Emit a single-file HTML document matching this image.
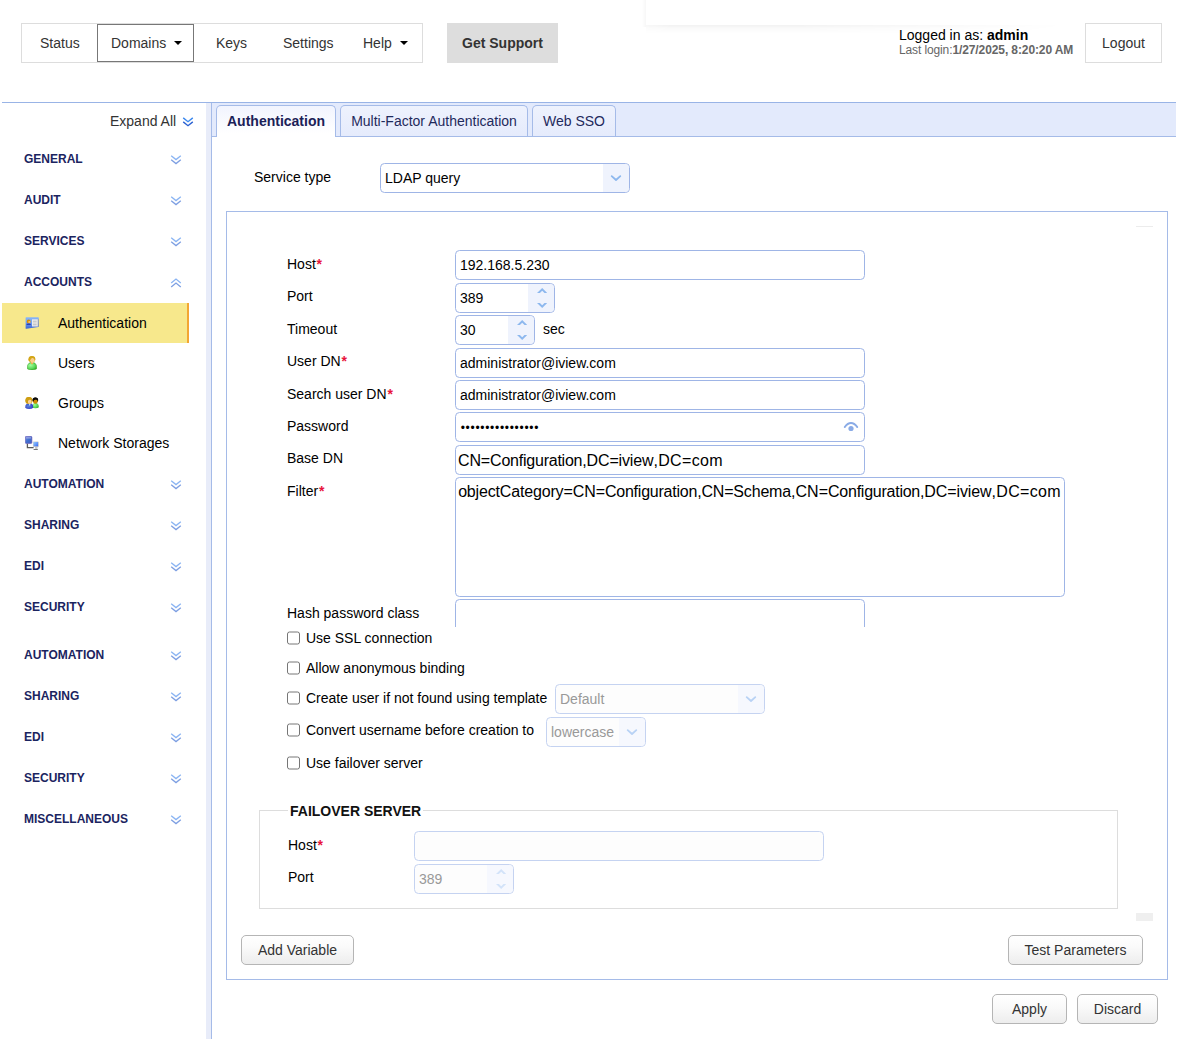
<!DOCTYPE html>
<html lang="en">
<head>
<meta charset="utf-8">
<title>Authentication</title>
<style>
*{box-sizing:border-box;margin:0;padding:0}
html,body{width:1179px;height:1039px;overflow:hidden;background:#fff}
body{font-family:"Liberation Sans",Arial,sans-serif;font-size:14px;color:#000;position:relative}
.abs{position:absolute}
.t{position:absolute;white-space:nowrap;line-height:16px}

/* header */
#nav{left:21px;top:23px;width:402px;height:40px;border:1px solid #ddd;background:#fff}
.nv{position:absolute;top:35px;color:#333;white-space:nowrap;line-height:16px}
#dom{left:97px;top:24px;width:97px;height:38px;border:1px solid #777;background:#fff}
.caret{position:absolute;width:0;height:0;border-left:4px solid transparent;border-right:4px solid transparent;border-top:4px solid #000}
#sup{left:447px;top:23px;width:111px;height:40px;background:#ddd;color:#333;font-weight:bold;text-align:center;line-height:40px}
#logout{left:1085px;top:23px;width:77px;height:40px;border:1px solid #ddd;color:#333;text-align:center;line-height:38px;background:#fff}
#shadowbox{left:646px;top:25px;width:420px;height:8px;background:linear-gradient(rgba(0,0,0,.05),rgba(0,0,0,.02) 45%,rgba(0,0,0,0));-webkit-mask-image:linear-gradient(to right,rgba(0,0,0,.6),#000 6%,#000 35%,transparent);mask-image:linear-gradient(to right,rgba(0,0,0,.6),#000 6%,#000 35%,transparent)}
#shadowl{left:642px;top:0;width:4px;height:27px;background:linear-gradient(to left,rgba(0,0,0,.03),rgba(0,0,0,0))}

/* sidebar */
#topline{left:2px;top:102px;width:1174px;height:1px;background:#99b4e6}
.sh{position:absolute;left:24px;font-weight:bold;font-size:12px;color:#1b2460;line-height:14px;white-space:nowrap}
.si{position:absolute;left:58px;font-size:14px;color:#000;line-height:16px;white-space:nowrap}
.chev{position:absolute;left:170px;width:12px;height:10px}
#sel{left:2px;top:303px;width:187px;height:40px;background:#f7e88c;border-right:2px solid #f3a633}
#split{left:206px;top:103px;width:6px;height:936px;background:#e8ecf9;border-right:1px solid #a5bbe8}

/* tabs */
#strip{left:212px;top:103px;width:964px;height:34px;background:#e3eafc;border-bottom:1px solid #a5bbe8}
.tab{position:absolute;top:105px;height:31px;border:1px solid #a5bbe8;border-bottom:none;border-radius:5px 5px 0 0;background:linear-gradient(#eef2fd,#e5ebfc);color:#1f2a5c;text-align:center;line-height:31px;white-space:nowrap}
.tab.act{height:32px;background:linear-gradient(#f1f4fe,#fff 88%);font-weight:bold;color:#1b2157;box-shadow:0 1px 0 #fff}

/* form */
.inp{position:absolute;border:1px solid #9fb5e6;border-radius:4.5px;background:#fff;height:30px}
.lbl{position:absolute;white-space:nowrap;line-height:16px;color:#000}
.req{color:#e8143c;font-weight:bold;margin-left:.8px}
.val{position:absolute;white-space:nowrap;line-height:16px}
.spin{position:absolute;right:0;top:0;bottom:0;width:26px;background:#eff3fd;border-radius:0 4px 4px 0}
.big{font-size:16px;line-height:18px}
.dis{border-color:#c5d3f1;background:#fdfdfd;color:#999}
.dis .spin{background:#f6f8fe}
.cb{transform:translateY(.5px);position:absolute;width:13px;height:13px;border:1px solid #767676;border-radius:2.5px;background:#fff}
.btn{position:absolute;height:30px;border:1px solid #b5b5b5;border-radius:5px;background:linear-gradient(#fff,#fafafa 40%,#ededed);color:#333;text-align:center;line-height:28px;white-space:nowrap}
#box{left:226px;top:211px;width:942px;height:769px;border:1px solid #a5bbe8}
#fs{left:259px;top:810px;width:859px;height:99px;border:1px solid #ddd}
</style>
</head>
<body>

<!-- HEADER -->
<div class="abs" id="shadowbox"></div><div class="abs" id="shadowl"></div>
<div class="abs" id="nav"></div>
<div class="abs" id="dom"></div>
<div class="nv" style="left:40px">Status</div>
<div class="nv" style="left:111px">Domains</div>
<div class="caret" style="left:174px;top:41px"></div>
<div class="nv" style="left:216px">Keys</div>
<div class="nv" style="left:283px">Settings</div>
<div class="nv" style="left:363px">Help</div>
<div class="caret" style="left:400px;top:41px"></div>
<div class="abs" id="sup">Get Support</div>
<div class="t" style="left:899px;top:27px;color:#000">Logged in as: <b>admin</b></div>
<div class="t" style="left:899px;top:43px;font-size:12px;color:#666;line-height:14px;letter-spacing:-0.12px">Last login:<b style="letter-spacing:-0.1px">1/27/2025, 8:20:20 AM</b></div>
<div class="abs" id="logout">Logout</div>

<div class="abs" id="topline"></div>

<!-- SIDEBAR -->
<div class="abs" id="sel"></div>
<div class="t" style="left:110px;top:113px;color:#333">Expand All</div>

<svg class="abs" style="left:182px;top:116.8px;width:12px;height:10px" viewBox="0 0 12 10"><g fill="none" stroke-width="1.4"><polyline stroke="#3b88ee" points="1.2,0.9 6,4.7 10.8,0.9"/><polyline stroke="#2b62d2" points="1.2,4.9 6,8.7 10.8,4.9"/></g></svg>
<div class="sh" style="top:152px">GENERAL</div>
<svg class="chev" style="top:155px" viewBox="0 0 12 10"><g fill="none" stroke-width="1.3"><polyline stroke="#8ab4f3" points="1.2,0.8 6,4.6 10.8,0.8"/><polyline stroke="#7d9fe2" points="1.2,4.8 6,8.6 10.8,4.8"/></g></svg>
<div class="sh" style="top:193px">AUDIT</div>
<svg class="chev" style="top:196px" viewBox="0 0 12 10"><g fill="none" stroke-width="1.3"><polyline stroke="#8ab4f3" points="1.2,0.8 6,4.6 10.8,0.8"/><polyline stroke="#7d9fe2" points="1.2,4.8 6,8.6 10.8,4.8"/></g></svg>
<div class="sh" style="top:234px">SERVICES</div>
<svg class="chev" style="top:237px" viewBox="0 0 12 10"><g fill="none" stroke-width="1.3"><polyline stroke="#8ab4f3" points="1.2,0.8 6,4.6 10.8,0.8"/><polyline stroke="#7d9fe2" points="1.2,4.8 6,8.6 10.8,4.8"/></g></svg>
<div class="sh" style="top:275px">ACCOUNTS</div>
<svg class="chev" style="top:278px" viewBox="0 0 12 10"><g fill="none" stroke-width="1.3"><polyline stroke="#8ab4f3" points="1.2,4.9 6,1.1 10.8,4.9"/><polyline stroke="#7d9fe2" points="1.2,8.9 6,5.1 10.8,8.9"/></g></svg>
<div class="sh" style="top:477px">AUTOMATION</div>
<svg class="chev" style="top:480px" viewBox="0 0 12 10"><g fill="none" stroke-width="1.3"><polyline stroke="#8ab4f3" points="1.2,0.8 6,4.6 10.8,0.8"/><polyline stroke="#7d9fe2" points="1.2,4.8 6,8.6 10.8,4.8"/></g></svg>
<div class="sh" style="top:518px">SHARING</div>
<svg class="chev" style="top:521px" viewBox="0 0 12 10"><g fill="none" stroke-width="1.3"><polyline stroke="#8ab4f3" points="1.2,0.8 6,4.6 10.8,0.8"/><polyline stroke="#7d9fe2" points="1.2,4.8 6,8.6 10.8,4.8"/></g></svg>
<div class="sh" style="top:559px">EDI</div>
<svg class="chev" style="top:562px" viewBox="0 0 12 10"><g fill="none" stroke-width="1.3"><polyline stroke="#8ab4f3" points="1.2,0.8 6,4.6 10.8,0.8"/><polyline stroke="#7d9fe2" points="1.2,4.8 6,8.6 10.8,4.8"/></g></svg>
<div class="sh" style="top:600px">SECURITY</div>
<svg class="chev" style="top:603px" viewBox="0 0 12 10"><g fill="none" stroke-width="1.3"><polyline stroke="#8ab4f3" points="1.2,0.8 6,4.6 10.8,0.8"/><polyline stroke="#7d9fe2" points="1.2,4.8 6,8.6 10.8,4.8"/></g></svg>
<div class="sh" style="top:648px">AUTOMATION</div>
<svg class="chev" style="top:651px" viewBox="0 0 12 10"><g fill="none" stroke-width="1.3"><polyline stroke="#8ab4f3" points="1.2,0.8 6,4.6 10.8,0.8"/><polyline stroke="#7d9fe2" points="1.2,4.8 6,8.6 10.8,4.8"/></g></svg>
<div class="sh" style="top:689px">SHARING</div>
<svg class="chev" style="top:692px" viewBox="0 0 12 10"><g fill="none" stroke-width="1.3"><polyline stroke="#8ab4f3" points="1.2,0.8 6,4.6 10.8,0.8"/><polyline stroke="#7d9fe2" points="1.2,4.8 6,8.6 10.8,4.8"/></g></svg>
<div class="sh" style="top:730px">EDI</div>
<svg class="chev" style="top:733px" viewBox="0 0 12 10"><g fill="none" stroke-width="1.3"><polyline stroke="#8ab4f3" points="1.2,0.8 6,4.6 10.8,0.8"/><polyline stroke="#7d9fe2" points="1.2,4.8 6,8.6 10.8,4.8"/></g></svg>
<div class="sh" style="top:771px">SECURITY</div>
<svg class="chev" style="top:774px" viewBox="0 0 12 10"><g fill="none" stroke-width="1.3"><polyline stroke="#8ab4f3" points="1.2,0.8 6,4.6 10.8,0.8"/><polyline stroke="#7d9fe2" points="1.2,4.8 6,8.6 10.8,4.8"/></g></svg>
<div class="sh" style="top:812px">MISCELLANEOUS</div>
<svg class="chev" style="top:815px" viewBox="0 0 12 10"><g fill="none" stroke-width="1.3"><polyline stroke="#8ab4f3" points="1.2,0.8 6,4.6 10.8,0.8"/><polyline stroke="#7d9fe2" points="1.2,4.8 6,8.6 10.8,4.8"/></g></svg>
<div class="si" style="top:315px">Authentication</div>
<div class="si" style="top:355px">Users</div>
<div class="si" style="top:395px">Groups</div>
<div class="si" style="top:435px">Network Storages</div>
<!-- sidebar icons -->
<svg class="abs" style="left:25px;top:317px;width:14px;height:12px" viewBox="0 0 14 12">
<defs><linearGradient id="vc" x1="0" y1="0" x2="0" y2="1"><stop offset="0" stop-color="#8bb8f8"/><stop offset=".5" stop-color="#6c9cf0"/><stop offset="1" stop-color="#3c66d4"/></linearGradient></defs>
<path d="M.6,.8 Q.6,.3 1.1,.3 L13.2,.2 Q13.8,.2 13.8,.8 L13.8,9.3 Q13.8,9.9 13.2,10 L1.4,11.7 Q.6,11.8 .6,11.2Z" fill="url(#vc)"/>
<rect x="7" y="2.3" width="6.2" height="7.2" fill="#ececec"/><rect x="8" y="3.8" width="3.6" height=".8" fill="#b5b5b5"/><rect x="8" y="5.6" width="3.6" height=".8" fill="#c5c5c5"/><rect x="8" y="7.4" width="3.6" height=".8" fill="#b0b0b0"/><rect x="12.8" y="2.3" width=".7" height="7.2" fill="#8a8a8a"/>
<ellipse cx="3.7" cy="4.6" rx="1.9" ry="2" fill="#d89000"/><ellipse cx="4.3" cy="5" rx="1.1" ry="1.1" fill="#f7c070"/>
<path d="M1.4,8 Q1.6,6.4 3.8,6.6 Q5.9,6.4 6,8Z" fill="#2b3fb4"/>
</svg>
<svg class="abs" style="left:27px;top:356px;width:10px;height:14px" viewBox="0 0 10 14">
<defs><radialGradient id="ug" cx=".35" cy=".35" r=".8"><stop offset="0" stop-color="#a5ff9c"/><stop offset=".6" stop-color="#5ad85a"/><stop offset="1" stop-color="#22a012"/></radialGradient></defs>
<path d="M.2,12.6 Q0,8.6 2,7.2 L3.6,6.6 L6.4,6.6 L8,7.2 Q10,8.6 9.8,12.6 Q8.6,14 5,14 Q1.4,14 .2,12.6Z" fill="url(#ug)" stroke="#2a9a1a" stroke-width=".5"/>
<path d="M3.9,6 L6.1,6 L6,7.6 L5,8.4 L4,7.6Z" fill="#e6b04a"/>
<ellipse cx="4.9" cy="3.2" rx="3.4" ry="3.1" fill="#d0a214"/>
<ellipse cx="5.4" cy="4.3" rx="2.2" ry="2.6" fill="#f9cd8e"/>
<path d="M1.6,3.4 Q2,.2 5,.2 Q8.2,.3 8.3,3.6 Q7.2,1.8 5.2,2 Q3.4,2.4 3,4.6 Q2.6,5.4 2.2,5.2 Q1.4,4.4 1.6,3.4Z" fill="#d4a616"/>
</svg>
<svg class="abs" style="left:25px;top:397px;width:14px;height:12px" viewBox="0 0 14 12">
<defs><radialGradient id="gg" cx=".35" cy=".4" r=".8"><stop offset="0" stop-color="#a0ff90"/><stop offset=".6" stop-color="#55d455"/><stop offset="1" stop-color="#1c9a10"/></radialGradient>
<radialGradient id="gb" cx=".4" cy=".5" r=".8"><stop offset="0" stop-color="#5a86d8"/><stop offset=".7" stop-color="#3440c8"/><stop offset="1" stop-color="#4a28b0"/></radialGradient></defs>
<path d="M7.3,10.6 Q7.1,7.4 8.6,6.4 L10.2,5.8 L12,6.2 Q14,7.2 13.8,10.2 Q12.6,11.2 10.4,11.2 Q8.2,11.2 7.3,10.6Z" fill="url(#gg)"/>
<ellipse cx="10.3" cy="3.1" rx="2.9" ry="2.5" fill="#111"/>
<ellipse cx="10.4" cy="4.6" rx="2.3" ry="2.2" fill="#cf8a00"/>
<path d="M7.6,3.6 Q7.6,.6 10.4,.6 Q13.2,.8 13.1,3.4 Q12,2 10.2,2.4 Q8.8,2.8 8.2,4.6Z" fill="#0a0a0a"/>
<path d="M.2,10.8 Q0,7.6 1.8,6.8 L3.6,6.2 L5.8,6.2 L7,6.8 Q8.4,7.8 8.2,10.8 Q7,12 4.2,12 Q1.4,12 .2,10.8Z" fill="url(#gb)"/>
<path d="M4,6.6 L5.4,6.6 L5.2,8.2 L4.7,8.8 L4.2,8.2Z" fill="#bff0ff"/>
<ellipse cx="3.9" cy="3.5" rx="3.5" ry="3.4" fill="#c99a12"/>
<ellipse cx="4.7" cy="4.7" rx="1.9" ry="2.3" fill="#fbd096"/>
<path d="M.5,3.4 Q.8,.1 3.9,.1 Q7.2,.2 7.3,3.4 Q6.4,2.2 4.6,2.4 Q3,2.6 2.8,4.6 Q2.6,6.4 1.6,6.4 Q.3,5.4 .5,3.4Z" fill="#cf9e12"/>
</svg>
<svg class="abs" style="left:25px;top:436px;width:14px;height:14px" viewBox="0 0 14 14">
<defs><linearGradient id="n1" x1="0" y1="0" x2="1" y2="1"><stop offset="0" stop-color="#7a8ee0"/><stop offset=".5" stop-color="#3f6fd0"/><stop offset="1" stop-color="#4a5cc0"/></linearGradient>
<linearGradient id="n2" x1="0" y1="0" x2="1" y2="1"><stop offset="0" stop-color="#9ad0ff"/><stop offset="1" stop-color="#3a68f0"/></linearGradient></defs>
<path d="M2.4,7.4 L2.4,11.6 L8.6,11.6" fill="none" stroke="#5a5a5a" stroke-width="1.3"/>
<rect x=".3" y=".3" width="6.6" height="7.2" rx="1" fill="url(#n1)" stroke="#6a58b0" stroke-width=".6"/>
<rect x="1.2" y="1.4" width="4.8" height="1" fill="#c8c0e8" opacity=".8"/>
<rect x="7.9" y="5.4" width="5.8" height="5.6" rx=".6" fill="#e4d8c4"/>
<rect x="8.4" y="5.9" width="4.8" height="4.5" fill="url(#n2)"/>
<path d="M10,11 L12.6,11 L12.4,13 L10.2,13Z" fill="#c8c8c8"/><rect x="8.6" y="13" width="4.2" height=".9" fill="#666"/>
</svg>
<div class="abs" id="split"></div>

<!-- TABS -->
<div class="abs" id="strip"></div>
<div class="tab act" style="left:216px;width:120px">Authentication</div>
<div class="tab" style="left:340px;width:188px">Multi-Factor Authentication</div>
<div class="tab" style="left:532px;width:84px">Web SSO</div>

<!-- FORM -->
<div class="abs" id="box"></div>
<!-- service type -->
<div class="lbl" style="left:254px;top:169px">Service type</div>
<div class="inp" style="left:380px;top:163px;width:250px"><div class="val" style="left:4px;top:6px">LDAP query</div><div class="spin" style="width:26px"></div>
<svg class="abs" style="left:229px;top:10px;width:12px;height:8px" viewBox="0 0 12 8"><polyline fill="none" stroke="#8db8ee" stroke-width="1.8" stroke-linecap="round" stroke-linejoin="round" points="1.7,2.1 6,6 10.3,2.1"/></svg></div>

<!-- main fields -->
<div class="lbl" style="left:287px;top:256px">Host<span class="req">*</span></div>
<div class="inp" style="left:455px;top:250px;width:410px"><div class="val" style="left:4px;top:6px">192.168.5.230</div></div>

<div class="lbl" style="left:287px;top:288px">Port</div>
<div class="inp" style="left:455px;top:283px;width:100px"><div class="val" style="left:4px;top:6px">389</div><div class="spin"></div>
<svg class="abs" style="left:80.8px;top:4px;width:10.4px;height:20px" viewBox="0 0 10.4 20"><g fill="#8db8ee"><polygon points="0,5 5.2,0 10.4,5 7.5,5 5.2,2.8 2.9,5"/><polygon points="0,15 5.2,20 10.4,15 7.5,15 5.2,17.2 2.9,15"/></g></svg></div>

<div class="lbl" style="left:287px;top:321px">Timeout</div>
<div class="inp" style="left:455px;top:315px;width:80px"><div class="val" style="left:4px;top:6px">30</div><div class="spin"></div>
<svg class="abs" style="left:60.8px;top:4px;width:10.4px;height:20px" viewBox="0 0 10.4 20"><g fill="#8db8ee"><polygon points="0,5 5.2,0 10.4,5 7.5,5 5.2,2.8 2.9,5"/><polygon points="0,15 5.2,20 10.4,15 7.5,15 5.2,17.2 2.9,15"/></g></svg></div>
<div class="lbl" style="left:543px;top:321px">sec</div>

<div class="lbl" style="left:287px;top:353px">User DN<span class="req">*</span></div>
<div class="inp" style="left:455px;top:348px;width:410px"><div class="val" style="left:4px;top:6px">administrator@iview.com</div></div>

<div class="lbl" style="left:287px;top:386px">Search user DN<span class="req">*</span></div>
<div class="inp" style="left:455px;top:380px;width:410px"><div class="val" style="left:4px;top:6px">administrator@iview.com</div></div>

<div class="lbl" style="left:287px;top:418px">Password</div>
<div class="inp" style="left:455px;top:412px;width:410px"><div class="val" id="pw" style="left:4.7px;top:7.4px;font-size:12px;letter-spacing:.7px">••••••••••••••••</div>
<svg class="abs" style="left:387px;top:8px;width:16px;height:12px" viewBox="0 0 16 12"><path d="M1.7,6.1 C4,2.9 6,2 8,2 C10,2 12,2.9 14.3,6.1" fill="none" stroke="#8aabe6" stroke-width="1.8" stroke-linecap="round"/><circle cx="8" cy="7.5" r="2.6" fill="#8aabe6"/></svg></div>

<div class="lbl" style="left:287px;top:450px">Base DN</div>
<div class="inp" style="left:455px;top:445px;width:410px"><div class="val big" style="left:2px;top:6px"><span style="letter-spacing:-0.118px">CN=</span><span style="letter-spacing:-0.231px">Configuration</span><span style="letter-spacing:-0.151px">,DC=iview</span><span style="letter-spacing:0.345px">,DC=com</span></div></div>

<div class="lbl" style="left:287px;top:483px">Filter<span class="req">*</span></div>
<div class="inp" style="left:455px;top:477px;width:610px;height:120px"><div class="val big" style="left:2.13px;top:5px"><span style="letter-spacing:-0.166px">objectCategory</span><span style="letter-spacing:-0.082px">=CN=</span><span style="letter-spacing:-0.223px">Configuration</span><span style="letter-spacing:-0.179px">,CN=Schema</span><span style="letter-spacing:0.032px">,CN=</span><span style="letter-spacing:-0.246px">Configuration</span><span style="letter-spacing:-0.107px">,DC=iview</span><span style="letter-spacing:0.311px">,DC=com</span></div></div>

<div class="lbl" style="left:287px;top:605px">Hash password class</div>
<div class="abs" style="left:455px;top:599px;width:410px;height:28px;overflow:hidden"><div class="inp" style="left:0;top:0;width:410px;height:40px"></div></div>

<!-- checkboxes -->
<div class="cb" style="left:287px;top:631px"></div><div class="lbl" style="left:306px;top:630px">Use SSL connection</div>
<div class="cb" style="left:287px;top:661px"></div><div class="lbl" style="left:306px;top:660px">Allow anonymous binding</div>
<div class="cb" style="left:287px;top:691px"></div><div class="lbl" style="left:306px;top:690px">Create user if not found using template</div>
<div class="inp dis" style="left:555px;top:684px;width:210px"><div class="val" style="left:4px;top:6px">Default</div><div class="spin"></div>
<svg class="abs" style="left:189px;top:10px;width:12px;height:8px" viewBox="0 0 12 8"><polyline fill="none" stroke="#b8d2f5" stroke-width="1.8" stroke-linecap="round" stroke-linejoin="round" points="1.7,2.1 6,6 10.3,2.1"/></svg></div>
<div class="cb" style="left:287px;top:723px"></div><div class="lbl" style="left:306px;top:722px">Convert username before creation to</div>
<div class="inp dis" style="left:546px;top:717px;width:100px"><div class="val" style="left:4px;top:6px">lowercase</div><div class="spin"></div>
<svg class="abs" style="left:79px;top:10px;width:12px;height:8px" viewBox="0 0 12 8"><polyline fill="none" stroke="#b8d2f5" stroke-width="1.8" stroke-linecap="round" stroke-linejoin="round" points="1.7,2.1 6,6 10.3,2.1"/></svg></div>
<div class="cb" style="left:287px;top:756px"></div><div class="lbl" style="left:306px;top:755px">Use failover server</div>

<!-- failover fieldset -->
<div class="abs" id="fs"></div>
<div class="abs" style="left:288px;top:800px;width:135px;height:20px;background:#fff"></div>
<div class="lbl" style="left:290px;top:803px;font-weight:bold;color:#111">FAILOVER SERVER</div>
<div class="lbl" style="left:288px;top:837px">Host<span class="req">*</span></div>
<div class="inp dis" style="left:414px;top:831px;width:410px"></div>
<div class="lbl" style="left:288px;top:869px">Port</div>
<div class="inp dis" style="left:414px;top:864px;width:100px"><div class="val" style="left:4px;top:6px">389</div><div class="spin"></div>
<svg class="abs" style="left:80.8px;top:4px;width:10.4px;height:20px" viewBox="0 0 10.4 20"><g fill="#d3e3f9"><polygon points="0,5 5.2,0 10.4,5 7.5,5 5.2,2.8 2.9,5"/><polygon points="0,15 5.2,20 10.4,15 7.5,15 5.2,17.2 2.9,15"/></g></svg></div>

<div class="abs" style="left:1136px;top:913px;width:17px;height:8px;background:#efefef"></div>
<div class="abs" style="left:1136px;top:226px;width:17px;height:1px;background:#ececec"></div>

<!-- buttons -->
<div class="btn" style="left:241px;top:935px;width:113px">Add Variable</div>
<div class="btn" style="left:1008px;top:935px;width:135px">Test Parameters</div>
<div class="btn" style="left:992px;top:994px;width:75px">Apply</div>
<div class="btn" style="left:1077px;top:994px;width:81px">Discard</div>


</body>
</html>
